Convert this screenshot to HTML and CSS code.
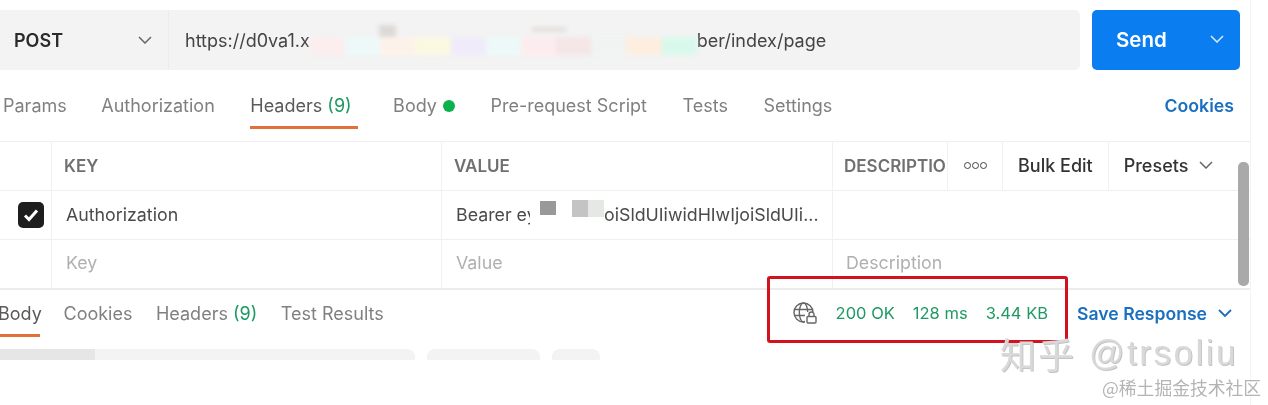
FILE: index.html
```html
<!DOCTYPE html>
<html lang="en">
<head>
<meta charset="utf-8">
<title>POST request</title>
<link rel="stylesheet" href="styles.css">
</head>
<body>
<div class="page">
  <main class="app">
    <section class="request-bar">
      <div class="url-box">
        <div class="method">
          <span>POST</span>
          <svg class="chev" viewBox="0 0 14 8"><path d="M1 1l6 6 6-6"/></svg>
        </div>
        <div class="url">
          <span>https://d0va1.x</span>
          <div class="smudge">
            <i class="s1"></i><i class="s2"></i><i class="s3"></i><i class="s4"></i><i class="s5"></i><i class="s6"></i><i class="s7"></i><i class="s8"></i><i class="s9"></i><i class="s10"></i><i class="s11"></i>
            <i class="sq sq-a"></i><i class="sq sq-b"></i>
          </div>
          <span>ber/index/page</span>
        </div>
      </div>
      <button class="send">
        <span>Send</span>
        <svg class="chev" viewBox="0 0 14 8"><path d="M1 1l6 6 6-6"/></svg>
      </button>
    </section>

    <nav class="tabs req-tabs">
      <a class="first">Params</a>
      <a>Authorization</a>
      <a class="active">Headers <b>(9)</b></a>
      <a>Body <i class="dot"></i></a>
      <a>Pre-request Script</a>
      <a>Tests</a>
      <a>Settings</a>
      <a class="cookies">Cookies</a>
    </nav>

    <section class="table">
      <div class="row head">
        <div class="c0"></div>
        <div class="c1">KEY</div>
        <div class="c2">VALUE</div>
        <div class="c3">
          <span class="desc">DESCRIPTION</span>
          <span class="tool dots"><i></i><i></i><i></i></span>
          <span class="tool">Bulk Edit</span>
          <span class="tool presets">Presets <svg class="chev" viewBox="0 0 14 8"><path d="M1 1l6 6 6-6"/></svg></span>
        </div>
      </div>
      <div class="row body-row">
        <div class="c0">
          <span class="check"><svg viewBox="0 0 16 14"><path d="M2 7.5l4 4 8-9"/></svg></span>
        </div>
        <div class="c1">Authorization</div>
        <div class="c2 bearer">
          <span class="cut">Bearer ey</span>
          <i class="g1"></i><i class="g2"></i><i class="g3"></i>
          <span>oiSldUIiwidHIwIjoiSldUIi...</span>
        </div>
        <div class="c3"></div>
      </div>
      <div class="row ph">
        <div class="c0"></div>
        <div class="c1">Key</div>
        <div class="c2">Value</div>
        <div class="c3">Description</div>
      </div>
    </section>

    <section class="response">
      <nav class="tabs res-tabs">
        <a class="active">Body</a>
        <a>Cookies</a>
        <a>Headers <b>(9)</b></a>
        <a>Test Results</a>
      </nav>
      <div class="status">
        <svg class="globe" viewBox="0 0 24 22">
          <circle cx="10.5" cy="10.5" r="9.5"/>
          <ellipse cx="10.5" cy="10.5" rx="4.2" ry="9.5"/>
          <path d="M1.5 7.5h18M1.5 13.5h18"/>
          <rect class="lock-bg" x="12" y="10" width="12" height="12"/>
          <rect x="14" y="14.5" width="9" height="6.5" rx="1"/>
          <path d="M16 14.5v-2a2.5 2.5 0 0 1 5 0v2"/>
        </svg>
        <span>200 OK</span>
        <span>128 ms</span>
        <span>3.44 KB</span>
      </div>
      <a class="save">Save Response <svg class="chev" viewBox="0 0 14 8"><path d="M1 1l6 6 6-6"/></svg></a>
    </section>

    <section class="skeleton">
      <div class="sk sk-a"><i></i></div>
      <div class="sk sk-b"></div>
      <div class="sk sk-c"></div>
    </section>
  </main>

  <div class="scrollbar"></div>
  <div class="annotation"></div>
  <div class="mark-zhihu"><span class="zh">知乎</span><span class="at">@trsoliu</span></div>
  <div class="mark-juejin">@稀土掘金技术社区</div>
</div>
</body>
</html>
```

FILE: styles.css
```css
* { box-sizing: border-box; }
html, body { margin: 0; padding: 0; background: #fff; }
body { font-family: Inter, "Noto Sans", sans-serif; font-size: 18px; }

.page {
  position: relative;
  width: 1268px;
  height: 405px;
  overflow: hidden;
  background: #fff;
  filter: blur(0.35px);
}
.app {
  width: 1251px;
  height: 405px;
  padding-top: 10px;
  border-right: 1px solid #f4f4f4;
  display: flex;
  flex-direction: column;
}

.chev { width: 14px; height: 8px; fill: none; stroke: #666; stroke-width: 1.5; flex: none; }

/* request bar */
.request-bar { display: flex; height: 60px; gap: 12px; flex: none; }
.url-box {
  width: 1080px;
  flex: none;
  display: flex;
  background: #f3f3f3;
  border-radius: 0 5px 5px 0;
}
.method {
  width: 169px;
  padding: 0 16px 0 14px;
  display: flex;
  align-items: center;
  justify-content: space-between;
  border-right: 1px solid #ececec;
  font-weight: 600;
  color: #2b2b2b;
  flex: none;
}
.url { display: flex; align-items: center; padding-left: 16px; color: #444; flex: 1; min-width: 0; }
.smudge { position: relative; display: flex; width: 387px; height: 18px; margin-top: 12px; flex: none; filter: blur(2px); }
.smudge i { flex: 1; display: block; }
.s1 { background: #fcedef; } .s2 { background: #ecf9f8; } .s3 { background: #fdf2e9; }
.s4 { background: #fbf8e2; } .s5 { background: #efebfa; } .s6 { background: #ecf9f8; }
.s7 { background: #fdecef; } .s8 { background: #f4e6e7; } .s9 { background: #f0f3f1; }
.s10 { background: #fdeee0; } .s11 { background: #d9f8ec; }
.smudge .sq { position: absolute; flex: none; background: #ded9d6; }
.sq-a { left: 69px; top: -12px; width: 17px; height: 12px; }
.sq-b { left: 222px; top: -10px; width: 34px; height: 5px; opacity: .7; }

.send {
  width: 148px;
  flex: none;
  padding: 0 16px 2px 24px;
  display: flex;
  align-items: center;
  justify-content: space-between;
  background: #0a7df0;
  border: 0;
  border-radius: 5px;
  color: #fff;
  font: 600 20.5px Inter, sans-serif;
}
.send .chev { stroke: #dcecff; }

/* tabs */
.tabs { display: flex; gap: 35.5px; color: #808080; }
.tabs a { display: block; white-space: nowrap; }
.tabs b { font-weight: 400; color: #1a9a62; }
.req-tabs { height: 71px; padding: 25px 16px 0 3px; flex: none; }
.req-tabs a { height: 34px; }
.req-tabs .first { margin-right: -1px; }
.tabs a.active { color: #5a5a5a; border-bottom: 3px solid #e2703a; }
.req-tabs a.active { padding-right: 6px; }
.dot { display: inline-block; width: 12px; height: 12px; margin-left: 1px; border-radius: 50%; background: #0cb14f; }
.cookies { margin-left: auto; color: #1a6fc0; font-weight: 600; font-size: 17.7px; }

/* table */
.table { flex: none; border-top: 1px solid #eee; }
.row { display: flex; height: 49px; border-bottom: 1px solid #efefef; font-size: 17.8px; color: #4a4a4a; }
.row.head { font-weight: 600; font-size: 17px; color: #707070; }
.row.ph { height: 50px; color: #b0b0b0; border-bottom: 2px solid #ececec; }
.c0, .c1, .c2, .c3 { display: flex; align-items: center; min-width: 0; }
.c0 { width: 52px; padding-left: 18px; border-right: 1px solid #f1f1f1; flex: none; }
.c1 { width: 390px; padding-left: 14px; border-right: 1px solid #f1f1f1; flex: none; }
.c2 { width: 391px; padding-left: 14px; border-right: 1px solid #f1f1f1; white-space: nowrap; flex: none; }
.c3 { flex: 1; padding-left: 13px; }
.head .c1, .head .c2 { padding-left: 12px; }
.head .c3 { padding: 0; }
.body-row .c1, .body-row .c2, .body-row .c3 { padding-bottom: 2px; }
.ph .c1, .ph .c2, .ph .c3 { padding-bottom: 4px; }

.desc { width: 114px; padding-left: 11px; overflow: hidden; white-space: nowrap; flex: none; }
.tool {
  height: 100%;
  display: flex;
  align-items: center;
  gap: 10px;
  padding: 0 15px 2px;
  border-left: 1px solid #f1f1f1;
  color: #333;
  flex: none;
  font-size: 18px;
  font-weight: 500;
}
.dots { width: 55px; justify-content: center; gap: 1px; }
.dots i { width: 7px; height: 7px; border: 1.5px solid #444; border-radius: 50%; }
.presets .chev { margin-left: 1px; }

.check {
  width: 26px;
  height: 26px;
  display: flex;
  align-items: center;
  justify-content: center;
  background: #1e1e1e;
  border-radius: 5px;
}
.check svg { width: 16px; height: 14px; fill: none; stroke: #fff; stroke-width: 3; }

.cut { width: 74px; overflow: hidden; flex: none; }
.bearer i { display: block; flex: none; }
.g1 { width: 16px; height: 14px; margin: -12px 0 0 10px; background: #999; }
.g2 { width: 16px; height: 17px; margin: -12px 0 0 16px; background: #c4c4c4; }
.g3 { width: 16px; height: 17px; margin: -12px 0 0 0; background: #e6e8e6; }

/* response row */
.response { display: flex; align-items: flex-start; flex: none; height: 48px; padding-top: 12px; }
.res-tabs { gap: 23.5px; margin-top: 1px; }
.res-tabs a { height: 34px; }
.res-tabs a.active { margin-left: -2px; width: 42px; }
.status { display: flex; align-items: center; gap: 18px; margin-left: auto; color: #1f9a62; font-size: 16.5px; height: 22px; }
.globe { width: 24px; height: 22px; margin-right: 1px; fill: none; stroke: #666; stroke-width: 1.4; }
.lock-bg { fill: #fff; stroke: none; }
.save { display: flex; align-items: center; gap: 11px; margin: 0 18px 0 29px; color: #1a6fc0; font-weight: 600; font-size: 17.6px; height: 22px; }
.save .chev { stroke: #1a6fc0; stroke-width: 1.8; }

/* loading placeholders */
.skeleton { display: flex; gap: 12px; margin-top: 11px; height: 11px; overflow: hidden; flex: none; }
.sk { height: 20px; background: #f3f3f3; border-radius: 8px; }
.sk-a { width: 415px; border-radius: 0 8px 8px 0; overflow: hidden; }
.sk-a i { display: block; width: 95px; height: 100%; background: #e6e6e6; }
.sk-b { width: 113px; }
.sk-c { width: 48px; }

/* overlays */
.scrollbar {
  position: absolute;
  left: 1238px;
  top: 162px;
  width: 11px;
  height: 124px;
  border-radius: 5px;
  background: #a9a9a9;
}
.annotation {
  position: absolute;
  left: 767px;
  top: 276px;
  width: 301px;
  height: 67px;
  border: 3px solid #d3121f;
  border-radius: 3px;
}
.mark-zhihu {
  position: absolute;
  left: 1000px;
  top: 327px;
  display: flex;
  gap: 13px;
  color: #d9d9d9;
  white-space: nowrap;
  text-shadow: 1px 1px 0 #c4c4c4;
}
.zh { font: 36px "Noto Sans CJK SC", sans-serif; letter-spacing: 2px; }
.at { font: 35px "Liberation Sans", sans-serif; letter-spacing: 2.5px; line-height: 52px; }
.mark-juejin {
  position: absolute;
  left: 1102px;
  top: 377px;
  font: 17.8px "Noto Sans CJK SC", sans-serif;
  line-height: 21px;
  color: #b4b4b4;
  white-space: nowrap;
}
```
